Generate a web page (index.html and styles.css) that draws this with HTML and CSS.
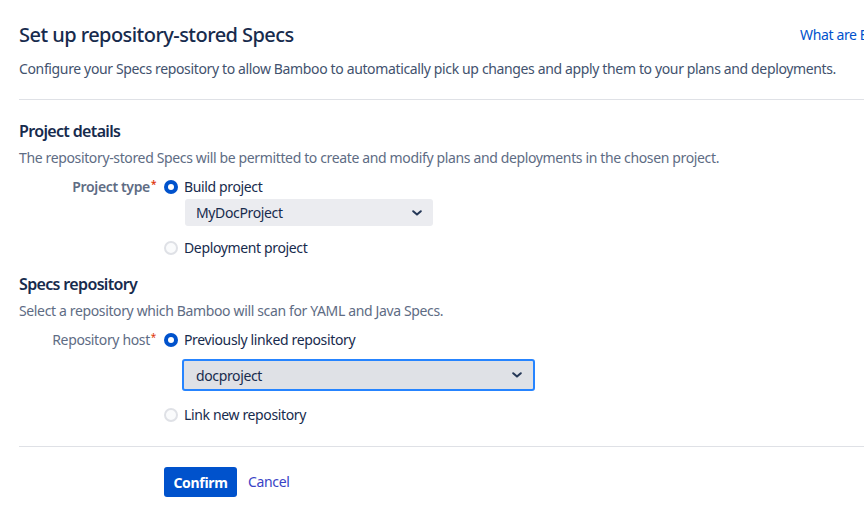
FILE: index.html
```html
<!DOCTYPE html>
<html lang="en">
<head>
<meta charset="utf-8">
<title>Set up repository-stored Specs</title>
<link rel="stylesheet" href="styles.css">
</head>
<body>
<div class="page">
  <header class="header">
    <h1 class="title">Set up repository-stored Specs</h1>
    <a class="help-link" href="#">What are Bamboo Specs?</a>
  </header>
  <p class="intro">Configure your Specs repository to allow Bamboo to automatically pick up changes and apply them to your plans and deployments.</p>
  <hr class="divider divider-top">

  <section class="section">
    <h2 class="section-title">Project details</h2>
    <p class="section-desc">The repository-stored Specs will be permitted to create and modify plans and deployments in the chosen project.</p>
    <div class="field">
      <div class="field-label strong">Project type<span class="req">*</span></div>
      <div class="field-body">
        <label class="radio"><span class="radio-dot checked"></span>Build project</label>
        <div class="select select-project"><span>MyDocProject</span><svg class="chev" viewBox="0 0 10 6" width="10" height="6"><path d="M1.2 1.2 L5 4.6 L8.8 1.2" fill="none" stroke="#253858" stroke-width="2" stroke-linecap="round" stroke-linejoin="round"/></svg></div>
        <label class="radio radio-after-select"><span class="radio-dot"></span>Deployment project</label>
      </div>
    </div>
  </section>

  <section class="section section-repo">
    <h2 class="section-title">Specs repository</h2>
    <p class="section-desc">Select a repository which Bamboo will scan for YAML and Java Specs.</p>
    <div class="field">
      <div class="field-label">Repository host<span class="req">*</span></div>
      <div class="field-body">
        <label class="radio"><span class="radio-dot checked"></span>Previously linked repository</label>
        <div class="select select-repo focused"><span>docproject</span><svg class="chev" viewBox="0 0 10 6" width="10" height="6"><path d="M1.2 1.2 L5 4.6 L8.8 1.2" fill="none" stroke="#253858" stroke-width="2" stroke-linecap="round" stroke-linejoin="round"/></svg></div>
        <label class="radio radio-after-repo"><span class="radio-dot"></span>Link new repository</label>
      </div>
    </div>
  </section>

  <hr class="divider divider-bottom">
  <div class="actions">
    <button class="btn-primary" type="button">Confirm</button>
    <a class="cancel" href="#">Cancel</a>
  </div>
</div>
</body>
</html>
```

FILE: styles.css
```css
html, body {
  margin: 0;
  padding: 0;
  background: #ffffff;
  overflow: hidden;
}
body {
  font-family: "Noto Sans", "Open Sans", sans-serif;
  font-size: 14px;
  letter-spacing: -0.36px;
  color: #172b4d;
}
.page {
  width: 1100px;
  padding: 23px 0 0 19px;
}
.header {
  display: flex;
  align-items: center;
  height: 24px;
}
.title {
  flex: 0 0 781px;
  margin: 0;
  font-size: 20px;
  line-height: 24px;
  font-weight: 500;
  letter-spacing: -0.55px;
  color: #172b4d;
}
.help-link {
  color: #0052cc;
  text-decoration: none;
  line-height: 20px;
  white-space: nowrap;
}
.intro {
  margin: 12px 0 0;
  line-height: 20px;
  color: #42526e;
}
.divider {
  border: 0;
  border-top: 1px solid #dfe1e6;
  margin: 0;
}
.divider-top {
  margin-top: 20px;
}
.section {
  margin-top: 21px;
}
.section-repo {
  margin-top: 16px;
}
.section-title {
  margin: 0;
  font-size: 16px;
  line-height: 20px;
  font-weight: 600;
  letter-spacing: -0.65px;
  color: #172b4d;
}
.section-desc {
  margin: 7px 0 0;
  line-height: 20px;
  color: #5e6c84;
}
.field {
  display: grid;
  grid-template-columns: 137px 1fr;
  column-gap: 8px;
  margin-top: 9px;
}
.field-label {
  text-align: right;
  line-height: 20px;
  color: #5e6c84;
  white-space: nowrap;
}
.field-label.strong {
  font-weight: 600;
}
.req {
  color: #de350b;
  font-size: 10px;
  vertical-align: top;
  line-height: 14px;
  margin-left: 1px;
}
.field-body {
  display: flex;
  flex-direction: column;
  align-items: flex-start;
}
.radio {
  display: flex;
  align-items: center;
  gap: 6px;
  line-height: 20px;
  color: #172b4d;
}
.radio-dot {
  box-sizing: border-box;
  width: 14px;
  height: 14px;
  border-radius: 50%;
  border: 2px solid #dfe1e6;
  background: #fafbfc;
}
.radio-dot.checked {
  border: 0;
  background: #0052cc;
  position: relative;
}
.radio-dot.checked::after {
  content: "";
  position: absolute;
  left: 4px;
  top: 4px;
  width: 6px;
  height: 6px;
  border-radius: 50%;
  background: #ffffff;
}
.select {
  box-sizing: border-box;
  display: flex;
  align-items: center;
  justify-content: space-between;
  background: #ebecf0;
  border-radius: 3px;
  color: #172b4d;
}
.select-project {
  margin: 2px 0 0 21px;
  width: 248px;
  height: 27px;
  padding: 0 11px 0 11px;
}
.select-repo {
  margin: 9px 0 0 18px;
  width: 353px;
  height: 32px;
  padding: 0 11px 0 12px;
  background: #dfe1e6;
  border: 2px solid #2684ff;
}
.chev {
  display: block;
}
.radio-after-select {
  margin-top: 12px;
}
.radio-after-repo {
  margin-top: 14px;
}
.divider-bottom {
  margin-top: 21px;
}
.actions {
  display: flex;
  align-items: center;
  gap: 11px;
  margin: 20px 0 0 145px;
}
.btn-primary {
  height: 30px;
  width: 73px;
  border: 0;
  border-radius: 3px;
  background: #0052cc;
  color: #ffffff;
  font-family: inherit;
  font-size: 14px;
  font-weight: 700;
  letter-spacing: -0.3px;
  padding: 0;
}
.cancel {
  color: #3a43c6;
  text-decoration: none;
  line-height: 20px;
}
```
